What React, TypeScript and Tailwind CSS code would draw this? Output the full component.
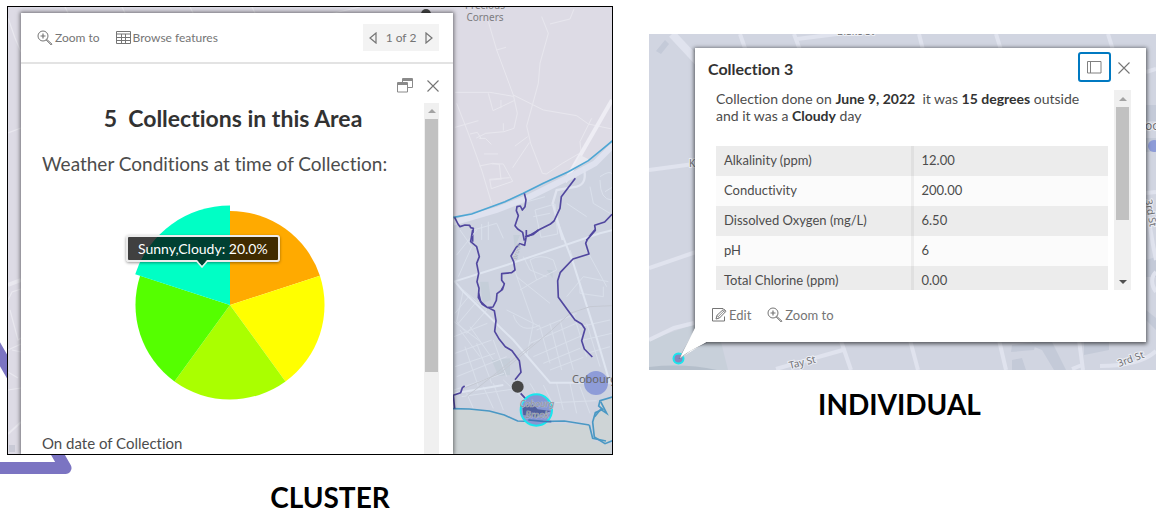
import React from "react";

const FONT = "font-['Lato','Open_Sans',sans-serif] [font-variant-ligatures:no-common-ligatures]";

function ZoomIcon() {
  return (
    <svg viewBox="0 0 16 16" className="h-4 w-4 shrink-0" fill="none" stroke="#757575" strokeWidth="1" aria-hidden="true">
      <circle cx="6" cy="6" r="5" />
      <path d="M3.5 6h5M6 3.5v5" strokeWidth="1.2" />
      <path d="M9.6 9.2l5.4 5-.8.8-5.2-5.2" />
    </svg>
  );
}

function TableIcon() {
  return (
    <svg viewBox="0 0 15 13" className="h-[13px] w-[15px] shrink-0" fill="none" stroke="#757575" aria-hidden="true">
      <path d="M.5.5h14v12H.5zM.5 3h14M.5 6.500h14M.5 9.500h14M5.500 3v9.500M9.500 3v9.500" />
    </svg>
  );
}

function EditIcon() {
  return (
    <svg viewBox="0 0 16 16" className="h-4 w-4 shrink-0" fill="none" stroke="#757575" aria-hidden="true">
      <path d="M12 1.500H1.500v12.500h12V9.500" />
      <path d="M5 12l1-3.700L12.800 2l2.200 2.200L8.500 11z" fill="#fff" />
      <path d="M6 8.500l2.300 2.300M7.200 9.700l6.500-6.500M11.500 3l2.300 2.300" strokeWidth=".8" />
    </svg>
  );
}

function CloseIcon() {
  return (
    <svg viewBox="0 0 12 12" className="h-3 w-3" fill="none" stroke="#757575" strokeWidth="1.1" aria-hidden="true">
      <path d="M.5.5l11 11M11.500.5l-11 11" />
    </svg>
  );
}

function UndockIcon() {
  return (
    <svg viewBox="0 0 16 15" className="h-[15px] w-4" fill="none" stroke="#8a8a8a" aria-hidden="true">
      <path d="M5.500 4V.5h10v9H11" />
      <path d="M5.500 2h10" strokeWidth="2" />
      <path d="M.5 4.500h10v9.500H.5z" fill="#fff" />
      <path d="M.5 6h10" strokeWidth="2" />
    </svg>
  );
}

function DockIcon() {
  return (
    <svg viewBox="0 0 15 13" className="h-[13px] w-[15px]" fill="none" stroke="#808080" aria-hidden="true">
      <path d="M.5.5h13.500v11.500H.5zM3.500.5v11.500" />
    </svg>
  );
}

function Arrow({ flip = false }: { flip?: boolean }) {
  return (
    <svg viewBox="0 0 8 12" className={flip ? "h-3 w-2 rotate-180" : "h-3 w-2"} fill="none" stroke="#757575" strokeWidth="1.2" aria-hidden="true">
      <path d="M1 1l6 5-6 5z" />
    </svg>
  );
}

function ScrollArrow({ down = false }: { down?: boolean }) {
  return (
    <svg viewBox="0 0 8 4" className={down ? "h-1 w-2 rotate-180" : "h-1 w-2"} aria-hidden="true">
      <path d="M4 0l4 4H0z" fill={down ? "#505050" : "#a3a3a3"} />
    </svg>
  );
}

function ClusterMap() {
  return (
    <svg viewBox="8 7 604 447" preserveAspectRatio="xMaxYMin slice" className="absolute inset-0 h-full w-full" aria-hidden="true">
      <rect x="0" y="0" width="620" height="460" fill="#dddbe5" />
      <g fill="none" stroke="#e9e8ef" strokeWidth="1.200">
        <path d="M8 18l7 20 6 14M8 133l13-5M65 7l4 8M122 7l4 8M330 14l30-7M190 7l4 8M252 7l4 8M8 350l13-6M8 300l4-8 9-3M10 310l8 30 3-2M12 350l9 2M8 372l10 6M8 390l13-2" />
        <path d="M8 285l13-5" strokeWidth="4" />
        <path d="M8 434l13-12" strokeWidth="2" />
      </g>
      <rect x="9" y="445" width="6" height="7" fill="#c9cad6" />
      <path d="M440 221L490 207L523 193L568 172L588 161L612 141V454H440z" fill="#ced3e0" />
      <g transform="translate(440 0) scale(.33333)" fill="none">
        <g stroke="#e8e7ee" strokeWidth="3">
          <path d="M145 65l25 85 50 135 12 55-10 45-30 10-55 5-28 14M50 310l35 90 40 110 30 100M305 50l20 50-25 90-5 60-35 128 12 52 35 90 12 2 48-32 48-28 15-3M220 285l90 45 100 17 35 25 70 15M455 355l-35 70 4 40M45 277h105l70 12M145 280l14 52 63-30M170 150l28-8M45 382l70-20M190 370v22M183 300v25M330 72l60-15 12-30M118 415h18l18 18M118 498l40-8 20 3 5 45M132 462h42M190 492l28 52-64 22-5-28 60-5M190 492h-35M268 428l-50 75M150 540l35-3M263 410l-38 28M90 402l22-5 12 20" />
        </g>
        <path d="M516 300L375 545" stroke="#eeedf4" strokeWidth="12" />
        <path d="M40 668L170 630L270 590L400 525L465 490L520 435" stroke="#dfe2ef" strokeWidth="18" />
        <path d="M430 500q15 50-20 60l-60 10-12 40 30 110" stroke="#e0e4ef" strokeWidth="7" />
        <path d="M420 465l30 15-55 30z" fill="#e9e9f0" />
        <g stroke="#dae0eb" strokeWidth="3">
          <path d="M285 630l60-18 8 90-50 10zM100 690l70-20 20 45M480 530q30-20 36-8M480 540q0 60 36 60M450 560l10 50 50 30M495 575l25-15M245 610l70-20M330 640l-50 10M125 672v48M145 665v55M380 610l60 40" />
        </g>
        <path d="M40 652L95 642L150 622L195 605L250 580L310 550L385 515L445 482L490 445L520 420" stroke="#4da6d4" strokeWidth="5" />
        <g stroke="#51479f" strokeWidth="5" strokeLinejoin="round">
          <path d="M44 652l10 20 6 8 15-5 14 1 3 7 8 2-2 20 0 20M253 580l5 20-3 20-8 10-6-12-10 2-2 12 6 15-10 30 8 10 15 10 5 25M406 535l-42 55-4 35-18 38-12 10-30 15-30 18-13 5M516 643l-22 23-30 10 2 12-27 32" />
        </g>
      </g>
      <g transform="translate(440 230) scale(.33333)" fill="none">
        <path d="M38 540q60-6 120 4 35 10 70 32l90 4 130 7 14 46 52 12V675H38z" fill="#ced4d6" />
        <path d="M120 155h25l8 55-25 10zM240 15h-20l4 40zM320 120h18v25zM155 390l55-5v50l-35 3z" fill="#c5ced9" />
        <g stroke="#d9dfea" strokeWidth="3">
          <path d="M70 180l70 60-60 70-30-35zM90 195l-45 55M110 215l-55 65M42 275l80 60M42 320l100-40M60 300l60 80M90 290l70 100M45 370l110-40M45 410l120-40M50 440l150-60M42 480l150-50M75 350l40 120M110 340l45 120M160 330l40 110M220 110l60 170-20 100M230 140l100 80M250 80l20 40 50 20M270 90q30-20 70 0l10 30-60 30zM290 150l-50 30M200 240l100 50M290 300l120-50M270 340l150-65M280 380l150-65M310 400l110-45M330 420l100-38M300 290l30 110M330 280l35 140M360 270l40 150M400 250l40 130M440 280l40 130M420 290l90-20M430 330l85-20M440 370l70-20M380 200l50-60 75 15M420 160v30l70 10v-30M440 60l60 110M390 60l10 30M55 140l40-90-35-50M110 0l-60 75M220 255q20 60 80 30M65 500l170-25M190 450l60 55M270 460l30 50M310 465l30 60M350 460l20 80M390 460l20 90M420 470l30 80M300 520l170-8M130 470l30 65M160 460l30 80M80 490l20 45" />
        </g>
        <path d="M42 155L200 105L480 10L520 0M45 155l25 30 150 145 110 128h185M350 -30l50 130 60 190 50 170M45 490l145-25" stroke="#dfe5f0" strokeWidth="6" />
        <path d="M60 480l120-50 150-125 60-55 60-20 65-3M80 500l200-160" stroke="#c5c9d3" strokeWidth="3" />
        <path d="M38 536l50 1 60 6 45 12 40 18 60 2 80-2 75 12" stroke="#4a98c4" strokeWidth="5" />
        <path d="M520 500l-40 12-4 16 12 10-22 10-8 28 5 45 32 20 25-10z" fill="#ced4d6" stroke="#4a98c4" strokeWidth="5" />
        <path d="M482 515l18 35-18-12-18 22M448 585l10 40 40 8" stroke="#4a98c4" strokeWidth="5" />
        <g stroke="#51479f" strokeWidth="5" strokeLinejoin="round">
          <path d="M98 0l-6 35 18 15 8 30-8 20 6 30-5 25 6 20-2 28 12 20 16 10 16-2 10-20 2-20 16-12 6-18-8-10v-20l30-3 10-8-4-25-8-17 15-25 12-12 14 5 5-28V0M255 20l25-7 15-13M467 0l-25 28-5 12 10 32-48 15-38 40-8 25 2 50 35 48 15 20 20 12 10 15-10 35 8 25 24 24M143 232l20 10 5 30-4 32 14 24 18 22 20 12 22 30 5 35-18 22M242 490l20 22M44 536l-4-40 22-8 5-15 7-5M190 170l-6 10" />
          <path d="M116 190l6 25 18 16" />
        </g>
        <circle cx="233" cy="470" r="18" fill="#464646" />
        <circle cx="468" cy="459" r="36" fill="#8e9cd8" />
        <circle cx="289" cy="540" r="47" fill="#8797d2" stroke="#19e6ee" strokeWidth="6" />
        <path d="M248 535q25-25 45 3l40 5-45 18-38-6z" fill="#51609c" />
        <path d="M265 570l45 4 24 1" stroke="#3f75b4" strokeWidth="5" />
      </g>
      <g fontFamily="Noto Sans, sans-serif" fill="#7c7c80" textAnchor="middle">
        <text x="485" y="9" fontSize="10">Precious</text>
        <text x="485" y="21" fontSize="10">Corners</text>
        <text x="572" y="383" fontSize="11" fill="#666" textAnchor="start">Cobourg</text>
        <g fontSize="9" fontStyle="italic" fill="#8b8f98" stroke="#c5cbd9" strokeWidth=".6" paintOrder="stroke">
          <text x="537" y="407">Cobourg</text>
          <text x="537" y="418">Brook</text>
        </g>
        <text transform="translate(519 252) rotate(-75)" fontSize="6" fill="#a9afba">Brook</text>
      </g>
      <circle cx="426" cy="14" r="5" fill="#464646" />
    </svg>
  );
}

function PointMap() {
  return (
    <svg viewBox="649 34 507 336" preserveAspectRatio="xMinYMin slice" className="absolute inset-0 h-full w-full" aria-hidden="true">
      <rect x="640" y="30" width="530" height="350" fill="#d1d5e1" />
      <path d="M649 340l46-16 26 18 7 28H649z" fill="#c8d0da" />
      <path d="M649 367q35-4 68 3H649z" fill="#b5bfcb" />
      <g fill="#c4cad8">
        <path d="M656 51l9-11 4 4-8 10zM1032 342h20l14 28h-12l-12-20-10-4zM1012 345l24-3-2 8-23 2zM1012 360l10-2 4 12h-14zM1084 342h25v8l-25 5zM1142 105h14v16h-14zM1146 260l10-3v20h-10zM1146 310l10 8v12l-10-10z" />
        <path d="M1146 138h10v14h-10z" />
      </g>
      <g stroke="#e0e3ee" strokeWidth="4" fill="none">
        <path d="M672 34l28 30" strokeWidth="8" />
        <path d="M740 34l7 20M794 34l6 16M797 39l40-5M919 34l4 16M996 34l5 16M1108 34l5 16M649 170l45-6M649 268l47-16M649 340l25-12 20-5M776 369l67-19M840 338l11 32M910 340l8 30M999 340l7 30M1079 340l4 30M1100 366q40 0 56-15M1072 369l10-4M1146 72l10-3M1146 193l10-1M1148 215l5 30 3 15M1156 272q-8 8 0 20" />
      </g>
      <g fontFamily="Noto Sans, sans-serif" fill="#6f7075" stroke="#eceef4" strokeWidth="2" paintOrder="stroke" fontSize="10">
        <text x="837" y="35">Blake St</text>
        <text x="689" y="167">Ki</text>
        <text transform="translate(790 369) rotate(-14)">Tay St</text>
        <text transform="translate(1119 367) rotate(-20)">3rd St</text>
        <text transform="translate(1145 200) rotate(80)">3rd St</text>
        <text x="1145" y="130" fontSize="12">oo</text>
      </g>
      <circle cx="1154" cy="146" r="6" fill="#8e9cd8" />
      <circle cx="678.500" cy="358.500" r="5" fill="#8587bd" stroke="#19e6ee" strokeWidth="2" />
    </svg>
  );
}

function PieChart() {
  return (
    <svg viewBox="0 0 200 200" className="block h-[200px] w-[200px]" role="img" aria-label="Weather conditions">
      <path d="M100 100V6A94.500 94.500 0 0 1 189.900 70.800z" fill="#ffaa00" />
      <path d="M100 100L189.900 70.800A94.500 94.500 0 0 1 155.500 176.500z" fill="#ffff00" />
      <path d="M100 100L155.500 176.500A94.500 94.500 0 0 1 44.500 176.500z" fill="#aaff00" />
      <path d="M100 100L44.500 176.500A94.500 94.500 0 0 1 10.100 70.800z" fill="#55ff00" />
      <path d="M100 100L5.200 69.200A99.500 99.500 0 0 1 100 .5z" fill="#00ffc5" />
    </svg>
  );
}

const readings: [string, string][] = [
  ["Alkalinity (ppm)", "12.00"],
  ["Conductivity", "200.00"],
  ["Dissolved Oxygen (mg/L)", "6.50"],
  ["pH", "6"],
  ["Total Chlorine (ppm)", "0.00"],
];

function ClusterPopup() {
  return (
    <section className="relative ml-[13px] mr-[159px] mt-1.5 bg-white shadow-[0_0_4px_1px_rgba(0,0,0,0.5)]">
      <header className="flex h-[51px] items-center border-b-2 border-[#e3e3e3] pl-4 pr-3.5 text-[12px] text-[#757575]">
        <button className="flex items-center gap-0.5"><ZoomIcon />Zoom to</button>
        <button className="ml-4 flex items-center gap-0.5"><TableIcon />Browse features</button>
        <div className="ml-auto flex h-[27px] w-[76px] items-center justify-between bg-[#f3f3f3] px-1.5">
          <button aria-label="Previous feature"><Arrow flip /></button>
          <span>1 of 2</span>
          <button aria-label="Next feature"><Arrow /></button>
        </div>
      </header>
      <div className="flex h-[39px] items-center justify-end gap-3.5 pr-3.5 pt-1">
        <button aria-label="Undock"><UndockIcon /></button>
        <button aria-label="Close"><CloseIcon /></button>
      </div>
      <div className="flex pl-[21px] pr-3.5">
        <div className="min-w-0 grow text-[#4c4c4c]">
          <h2 className="whitespace-pre text-center text-[23px] font-bold leading-[30px] text-[#323232]">5  Collections in this Area</h2>
          <p className="mt-[19px] whitespace-nowrap text-[19px] leading-6">Weather Conditions at time of Collection:</p>
          <div className="mt-[29px] flex justify-center pr-1.5">
            <div className="relative">
              <PieChart />
              <div className="absolute -left-1 top-[30px] whitespace-nowrap rounded-[3px] border-2 border-[#ececec] bg-black/75 px-2.5 text-[14px] leading-[23px] text-white shadow-[0_1px_3px_rgba(0,0,0,0.4)]">
                Sunny,Cloudy: 20.0%
                <svg viewBox="0 0 12 8" className="absolute left-[68px] top-[23px] h-2 w-3" aria-hidden="true">
                  <path d="M1 0l5 6 5-6z" fill="#004031" />
                  <path d="M.5 1L6 7l5.500-6" fill="none" stroke="#ececec" strokeWidth="1.500" />
                </svg>
              </div>
            </div>
          </div>
          <p className="mt-7 pb-px text-[15px] leading-5">On date of Collection</p>
        </div>
        <div className="flex w-[15px] shrink-0 flex-col items-center bg-[#f0f0f0]">
          <div className="flex h-4 items-center"><ScrollArrow /></div>
          <div className="h-[253px] w-[13px] bg-[#c1c1c1]" />
        </div>
      </div>
    </section>
  );
}

function CollectionPopup() {
  return (
    <section className="relative ml-[46px] mr-2.5 bg-white pb-[18px] shadow-[0_1px_4px_1px_rgba(0,0,0,0.6)]">
      <header className="flex h-[42px] items-center pl-[13px] pr-4">
        <h2 className="text-[16px] font-bold leading-5 text-[#323232]">Collection 3</h2>
        <button aria-label="Dock" className="-mt-1 ml-auto flex h-[30px] w-[33px] items-center justify-center rounded-[3px] border-2 border-[#0079c1]"><DockIcon /></button>
        <button aria-label="Close" className="-mt-0.5 ml-[7px]"><CloseIcon /></button>
      </header>
      <div className="flex h-[200px] overflow-hidden pl-[21px] pr-[15px]">
        <div className="min-w-0 grow text-[#4c4c4c]">
          <p className="pr-3.5 text-[14px] leading-[17px]">
            Collection done on <b className="text-[#323232]">June 9, 2022</b> &nbsp;it was <b className="text-[#323232]">15 degrees</b> outside and it was a <b className="text-[#323232]">Cloudy</b> day
          </p>
          <table className="mt-[22px] w-full border-collapse text-[13px]">
            <tbody>
              {readings.map(([name, value]) => (
                <tr key={name} className="h-[30px] odd:bg-[#ececec] even:bg-[#fbfbfb]">
                  <th scope="row" className="w-1/2 border-r-[3px] border-black/5 px-2 text-left font-normal">{name}</th>
                  <td className="px-2">{value}</td>
                </tr>
              ))}
            </tbody>
          </table>
        </div>
        <div className="ml-1.5 flex w-[17px] shrink-0 flex-col items-center bg-[#f0f0f0]">
          <div className="flex h-[17px] shrink-0 items-center"><ScrollArrow /></div>
          <div className="h-[113px] w-[13px] shrink-0 bg-[#c1c1c1]" />
          <div className="mt-auto flex h-[17px] items-center"><ScrollArrow down /></div>
        </div>
      </div>
      <footer className="mt-4 flex items-center gap-4 pl-4 text-[13px] leading-[18px] text-[#757575]">
        <button className="flex items-center gap-0.5"><EditIcon />Edit</button>
        <button className="flex items-center gap-0.5"><ZoomIcon />Zoom to</button>
      </footer>
      <svg viewBox="0 0 30 32" className="absolute -bottom-[17px] -left-[17px] h-8 w-[30px]" aria-hidden="true">
        <path d="M17 2L1 32L30 14L17 15z" fill="#fff" />
        <path d="M17 3L1 32L13 23L29 15.500" fill="none" stroke="#555b66" strokeOpacity=".45" />
        <path d="M17 1L3 29L28 15L30 0z" fill="#fff" />
      </svg>
    </section>
  );
}

export default function App() {
  return (
    <main className={`${FONT} relative grid min-h-screen grid-cols-[606fr_507fr] items-start gap-9 overflow-hidden bg-white pl-[7px] pr-[5px]`}>
      <svg viewBox="0 340 80 140" className="absolute left-0 top-[340px] h-[140px] w-20" fill="none" aria-hidden="true">
        <path d="M-7 342L65.500 468H-10" stroke="#7b74c2" strokeWidth="12" strokeLinejoin="round" />
      </svg>
      <figure className="relative mt-1.5 min-w-0">
        <div className="relative overflow-hidden border border-black">
          <ClusterMap />
          <ClusterPopup />
        </div>
        <figcaption className="mt-6 pl-10 text-center text-[28px] font-bold leading-9 text-black">CLUSTER</figcaption>
      </figure>
      <figure className="min-w-0 pt-[34px]">
        <div className="relative overflow-hidden pb-7 pt-3.5">
          <PointMap />
          <CollectionPopup />
        </div>
        <figcaption className="mt-4 pr-1.5 text-center text-[28px] font-bold leading-9 text-black">INDIVIDUAL</figcaption>
      </figure>
    </main>
  );
}
